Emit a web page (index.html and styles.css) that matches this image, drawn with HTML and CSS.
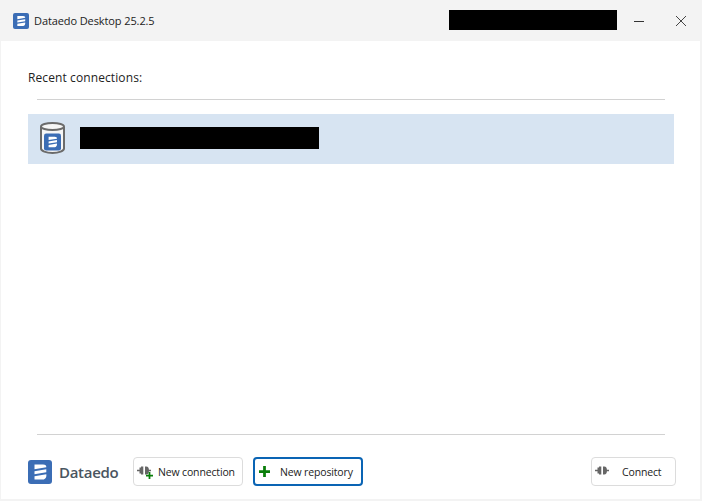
FILE: index.html
```html
<!DOCTYPE html>
<html>
<head>
	<meta charset="utf-8">
	<title>Dataedo Desktop 25.2.5</title>
	<link rel="stylesheet" href="styles.css">
</head>
<body>
	<svg class="defs" width="0" height="0">
		<symbol id="logo" viewBox="0 0 24 24">
			<rect width="24" height="24" rx="3" fill="#3b6db5"/>
			<path d="M6.500 4.500h8.500c2.500 0 3.500 1.300 3.300 2.800l-11.800 2z M6.500 11.200l11.800-2v3l-11.800 2z M6.500 16.200l11.800-2c.5 2.800-1 5.300-3.300 5.300h-8.500z" fill="#fff"/>
		</symbol>
		<symbol id="plug" viewBox="0 0 14 9">
			<path d="M0 3.800h2.500v1.400H0z M2.500 1.500h1.500v6H2.500z M4 .5h2.300v8H4z M8 .5h1.300c1.700 0 2.700 1.600 2.700 4s-1 4-2.700 4H8z M11.500 3.800H14v1.400h-2.500z" fill="#666"/>
		</symbol>
	</svg>

	<div class="window">
		<div class="titlebar">
			<svg class="title-logo"><use href="#logo"/></svg>
			<span class="title-text">Dataedo Desktop 25.2.5</span>
			<div class="redacted title-redacted"></div>
			<svg class="win-btn min-btn" width="12" height="12" viewBox="0 0 12 12"><path d="M1 6.500h10" stroke="#333" stroke-width="1"/></svg>
			<svg class="win-btn close-btn" width="12" height="12" viewBox="0 0 12 12"><path d="M1 1l10 10M11 1L1 11" stroke="#444" stroke-width="1"/></svg>
		</div>

		<div class="content">
			<div class="recent-label">Recent connections:</div>
			<div class="rule"></div>
			<div class="recent-row">
				<svg class="db-icon" width="25" height="32" viewBox="0 0 25 32">
					<path d="M1 5v21.500c0 2.300 5 4.500 11.500 4.500s11.500-2.200 11.500-4.500V5" fill="#f6f6f6" stroke="#6b6b6b" stroke-width="2"/>
					<ellipse cx="12.500" cy="4.500" rx="11.500" ry="3.500" fill="#f6f6f6" stroke="#6b6b6b" stroke-width="2"/>
					<use href="#logo" x="4" y="11" width="17" height="18"/>
				</svg>
				<div class="redacted row-redacted"></div>
			</div>
			<div class="spacer"></div>
			<div class="rule"></div>
			<div class="footer">
				<svg class="footer-logo"><use href="#logo"/></svg>
				<span class="brand">Dataedo</span>
				<button class="btn btn-conn">
					<span class="btn-icon">
						<svg width="14" height="9"><use href="#plug"/></svg>
						<svg class="plus-small" width="7" height="7" viewBox="0 0 8 8"><path d="M3 0h2v3h3v2H5v3H3V5H0V3h3z" fill="#0a7d0a"/></svg>
					</span>
					New connection
				</button>
				<button class="btn btn-repo">
					<svg width="11" height="11" viewBox="0 0 12 12"><path d="M4.500 0h3v4.500H12v3H7.500V12h-3V7.500H0v-3h4.500z" fill="#0a7d0a"/></svg>
					New repository
				</button>
				<div class="footer-gap"></div>
				<button class="btn btn-connect">
					<span class="btn-icon"><svg width="14" height="9"><use href="#plug"/></svg></span>
					Connect
				</button>
			</div>
		</div>
	</div>
</body>
</html>
```
FILE: styles.css
```css
html, body {
	margin: 0;
	padding: 0;
	height: 100%;
	background: #f3f3f3;
}
.defs {
	position: absolute;
}
.window {
	width: 700px;
	height: 499px;
	display: flex;
	flex-direction: column;
	font-family: "Open Sans", "Noto Sans", sans-serif;
	font-size: 11px;
	color: #222;
}
.titlebar {
	height: 41px;
	flex: none;
	display: flex;
	align-items: center;
	padding-left: 13px;
	background: #f3f3f3;
}
.title-logo {
	width: 16px;
	height: 16px;
}
.title-text {
	margin-left: 5px;
	letter-spacing: -0.1px;
}
.redacted {
	background: #000;
}
.title-redacted {
	width: 168px;
	height: 20px;
	margin-left: auto;
	margin-bottom: 1px;
}
.min-btn {
	margin-left: 16px;
}
.close-btn {
	margin-left: 30px;
	margin-right: 13px;
}
.content {
	flex: 1;
	display: flex;
	flex-direction: column;
	background: #fff;
	margin-left: 1px;
	padding: 0 24px 0 27px;
}
.recent-label {
	font-size: 12px;
	letter-spacing: 0.1px;
	margin-top: 28px;
	height: 30px;
}
.rule {
	height: 1px;
	background: #d2d2d2;
	margin: 0 11px 0 9px;
}
.recent-row {
	height: 48px;
	padding: 0 0 2px 12px;
	margin: 14px 2px 0 0;
	background: #d7e4f2;
	display: flex;
	align-items: center;
}
.row-redacted {
	width: 239px;
	height: 22px;
	margin-left: 15px;
}
.spacer {
	flex: 1;
}
.footer {
	height: 55px;
	padding-top: 9px;
	display: flex;
	align-items: center;
	flex: none;
}
.footer-logo {
	width: 24px;
	height: 24px;
}
.brand {
	width: 58px;
	margin-left: 7px;
	font-size: 15px;
	font-weight: 600;
	letter-spacing: -0.3px;
	color: #4a5560;
}
.btn {
	box-sizing: border-box;
	height: 29px;
	padding: 0;
	display: flex;
	align-items: center;
	background: #fff;
	border: 1px solid #dcdcdc;
	border-radius: 4px;
	font: inherit;
	font-size: 10.5px;
	letter-spacing: -0.15px;
	color: #222;
}
.btn-conn {
	width: 110px;
	margin-left: 16px;
	padding-left: 3px;
}
.btn-icon {
	position: relative;
	display: flex;
	margin-right: 7px;
	margin-bottom: 3px;
}
.plus-small {
	position: absolute;
	right: -2px;
	bottom: -4px;
}
.btn-repo {
	width: 110px;
	margin-left: 10px;
	padding-left: 4px;
	border: 2px solid #0a64b4;
}
.btn-repo svg {
	margin-right: 10px;
}
.footer-gap {
	flex: 1;
}
.btn-connect {
	width: 85px;
	padding-left: 3px;
}
.btn-connect .btn-icon {
	margin-right: 13px;
}
```
